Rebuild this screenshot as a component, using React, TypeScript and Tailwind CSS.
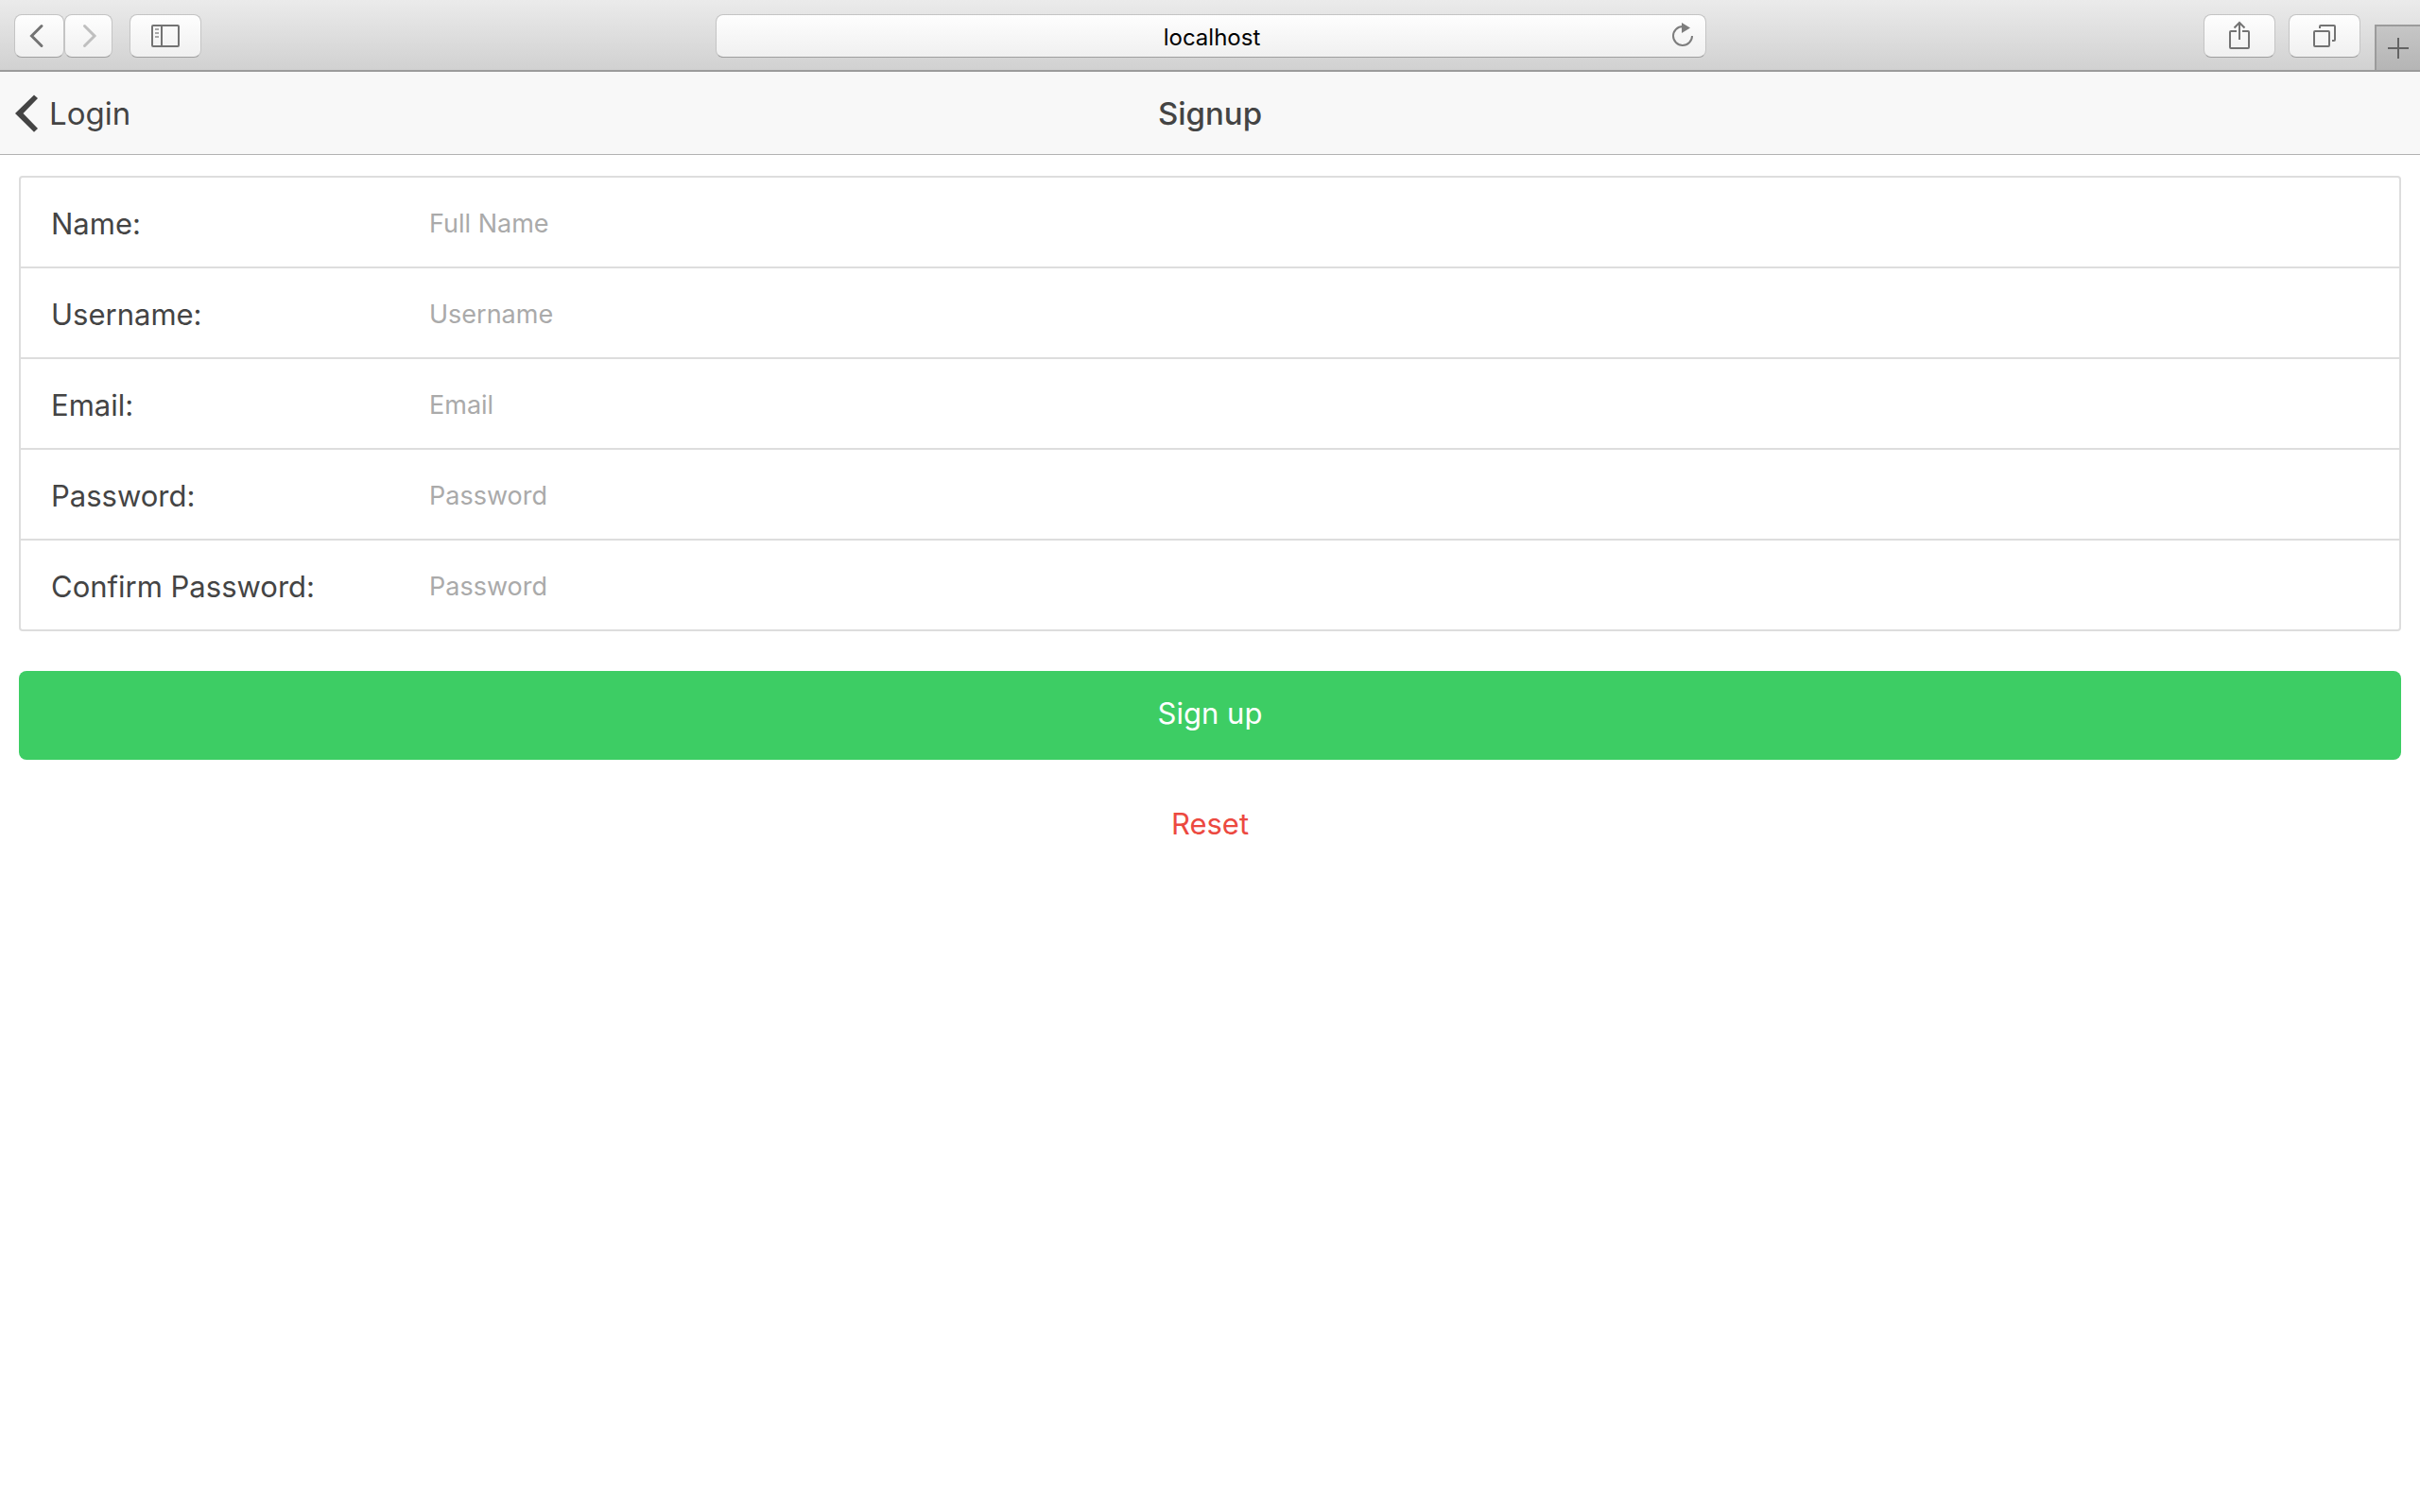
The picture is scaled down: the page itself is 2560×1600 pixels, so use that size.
import type { ReactNode } from "react";

const toolButton =
  "h-[46px] shrink-0 rounded-lg border border-[#c4c4c4] border-b-[#9f9f9f] bg-linear-to-b from-[#fefefe] to-[#f0f0f0]";

function Glyph({ children, color = "#737373" }: { children: ReactNode; color?: string }) {
  return (
    <svg className="block h-11 w-full" fill="none" stroke={color} strokeWidth="2" aria-hidden="true">
      {children}
    </svg>
  );
}

function BrowserBar() {
  return (
    <div className="grid grid-cols-[1fr_41%_1fr] items-start border-b-2 border-[#9b9b9b] bg-linear-to-b from-[#ebebeb] to-[#d1d1d1]">
      <div className="flex pt-[15px] pb-[13px] pl-[15px]">
        <button type="button" aria-label="Back" className={`${toolButton} w-[53px]`}>
          <Glyph>
            <path d="M28 11.500 17.500 22 28 32.500" strokeWidth="3" strokeLinecap="round" />
          </Glyph>
        </button>
        <button type="button" aria-label="Forward" className={`${toolButton} w-[51px]`}>
          <Glyph color="#bfbfbf">
            <path d="M20.500 11.500 31 22 20.500 32.500" strokeWidth="3" strokeLinecap="round" />
          </Glyph>
        </button>
        <button type="button" aria-label="Show sidebar" className={`${toolButton} ml-[18px] w-[76px]`}>
          <Glyph>
            <rect x="23" y="11" width="28" height="22" rx="1" />
            <path d="M33 11v22" />
            <path d="M26 15h4M26 19h4M26 23h4" stroke="#a8a8a8" />
          </Glyph>
        </button>
      </div>
      <div className="relative mt-[15px] ml-0.5">
        <input
          aria-label="Address"
          defaultValue="localhost"
          className={`${toolButton} block w-full pt-0.5 pl-0.5 text-center text-[24px] text-black outline-none`}
        />
        <button type="button" aria-label="Reload" className="absolute top-0 right-2 h-[46px] w-9">
          <svg viewBox="0 0 36 46" className="block h-[46px] w-9" fill="none" stroke="#7d7d7d" strokeWidth="2" aria-hidden="true">
            <path d="M29 23a10 10 0 1 1-10-10" />
            <path d="M18 9v11l9-5.500z" fill="#7d7d7d" stroke="none" />
          </svg>
        </button>
      </div>
      <div className="flex h-full items-start justify-end">
        <button type="button" aria-label="Share" className={`${toolButton} mt-[15px] w-[76px]`}>
          <Glyph>
            <path d="M34 17h-6a1 1 0 0 0-1 1v16a1 1 0 0 0 1 1h18a1 1 0 0 0 1-1V18a1 1 0 0 0-1-1h-6" />
            <path d="M37 26V8M31.500 13.500 37 8l5.500 5.500" />
          </Glyph>
        </button>
        <button type="button" aria-label="Show all tabs" className={`${toolButton} mt-[15px] ml-3.5 w-[76px]`}>
          <Glyph>
            <rect x="26" y="17" width="16" height="16" rx="1" />
            <path d="M32 14v-2a1 1 0 0 1 1-1h14a1 1 0 0 1 1 1v14a1 1 0 0 1-1 1h-2" />
          </Glyph>
        </button>
        <button
          type="button"
          aria-label="New tab"
          className="ml-[15px] h-12 w-12 shrink-0 self-end border-t-2 border-l-2 border-[#9b9b9b] bg-linear-to-b from-[#c6c6c6] to-[#b5b5b5]"
        >
          <svg viewBox="0 0 46 46" className="block size-[46px]" stroke="#636363" strokeWidth="2" aria-hidden="true">
            <path d="M23 12v22M12 23h22" />
          </svg>
        </button>
      </div>
    </div>
  );
}

const fields = [
  { id: "name", label: "Name:", placeholder: "Full Name", type: "text" },
  { id: "username", label: "Username:", placeholder: "Username", type: "text" },
  { id: "email", label: "Email:", placeholder: "Email", type: "email" },
  { id: "password", label: "Password:", placeholder: "Password", type: "password" },
  { id: "confirm", label: "Confirm Password:", placeholder: "Password", type: "password" },
];

export default function App() {
  return (
    <div className="min-h-screen bg-white font-['Inter',sans-serif] text-[#444]">
      <BrowserBar />
      <header className="grid h-22 grid-cols-[1fr_auto_1fr] items-center border-b border-[#b2b2b2] bg-[#f8f8f8]">
        <a href="#login" className="flex items-center gap-3 pl-4 text-[33px] leading-10">
          <svg viewBox="0 0 24 40" className="h-10 w-6" fill="#444" aria-hidden="true">
            <path d="M20 .500 24 4 8.500 20 24 36l-4 3.700L0 20z" />
          </svg>
          Login
        </a>
        <h1 className="text-[33px] leading-10 font-medium">Signup</h1>
      </header>
      <form className="px-5 pt-[22px]" onSubmit={(e) => e.preventDefault()}>
        <div className="divide-y-2 divide-[#ddd] rounded-sm border-2 border-[#ddd]">
          {fields.map((f) => (
            <div key={f.id} className="flex items-center pt-[3px] pl-8">
              <label htmlFor={f.id} className="w-[400px] shrink-0 text-[31px] leading-10">
                {f.label}
              </label>
              <input
                id={f.id}
                type={f.type}
                placeholder={f.placeholder}
                className="h-[91px] min-w-0 flex-1 bg-transparent text-[27px] outline-none placeholder:text-[#aaa]"
              />
            </div>
          ))}
        </div>
        <button type="submit" className="mt-[42px] block h-[94px] w-full rounded-lg bg-[#3dcd64] pb-1 text-[31px] text-white">
          Sign up
        </button>
        <button type="reset" className="mt-5 block h-[94px] w-full pt-0.5 text-[31px] text-[#ec4940]">
          Reset
        </button>
      </form>
    </div>
  );
}
